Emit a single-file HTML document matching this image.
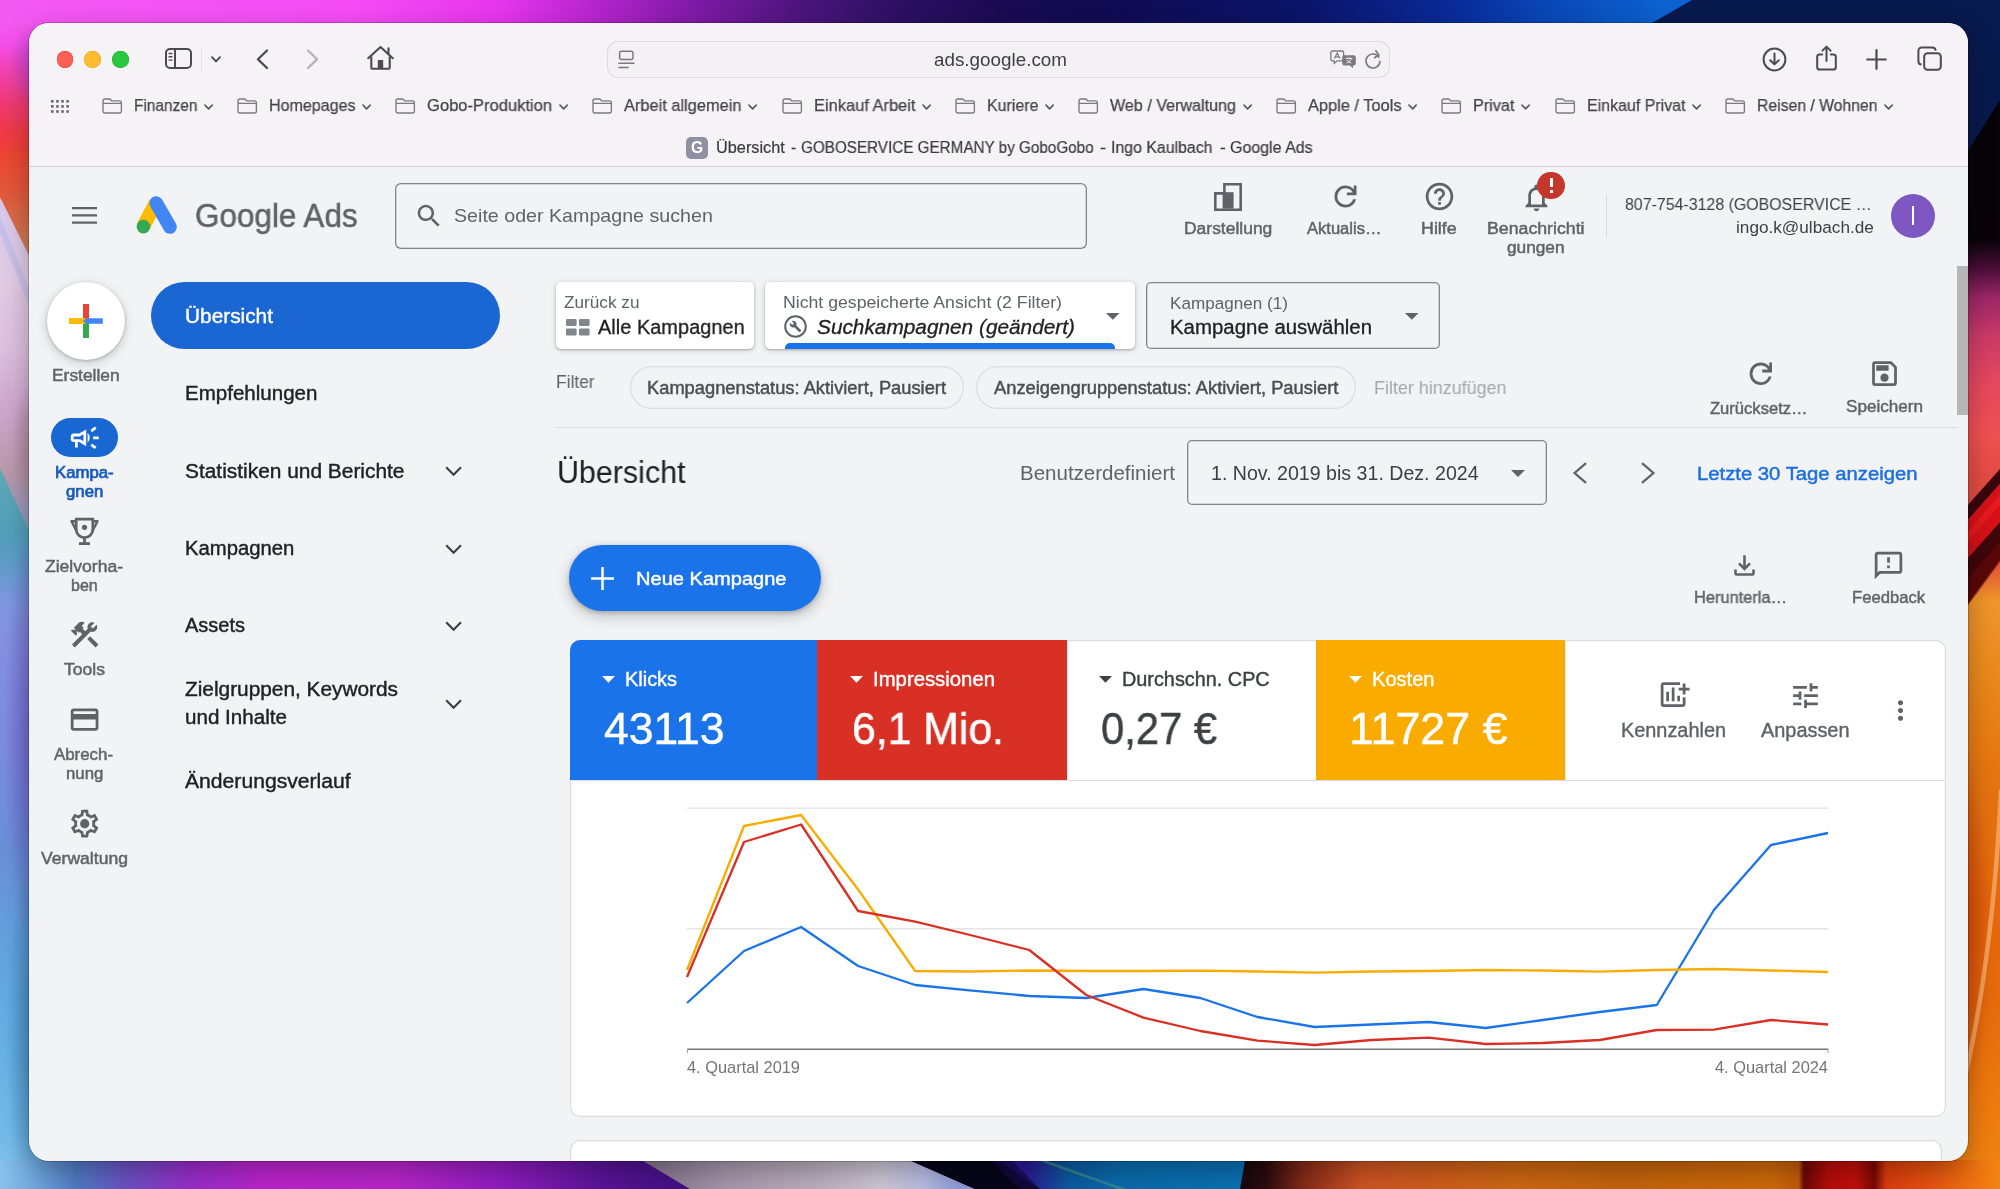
<!DOCTYPE html>
<html lang="de"><head><meta charset="utf-8"><title>Google Ads</title>
<style>
html,body{margin:0;padding:0;}
body{width:2000px;height:1189px;overflow:hidden;position:relative;background:#101030;font-family:"Liberation Sans", sans-serif;}
svg{display:block;overflow:visible}
</style></head><body>
<svg style="position:absolute;left:0;top:0;overflow:hidden" width="50" height="1189" viewBox="0 0 45 1189" preserveAspectRatio="none"><defs><linearGradient id="lg0" x1="0" x2="0" y1="0" y2="1189" gradientUnits="userSpaceOnUse"><stop offset="0.0000" stop-color="#f25af2"/><stop offset="0.0202" stop-color="#f258f0"/><stop offset="0.0378" stop-color="#f44ee6"/><stop offset="0.0589" stop-color="#f244b4"/><stop offset="0.0841" stop-color="#f03a7a"/><stop offset="0.1093" stop-color="#f03a48"/><stop offset="0.1346" stop-color="#ee4430"/><stop offset="0.1640" stop-color="#e2583a"/><stop offset="0.1682" stop-color="#d8c8ec"/><stop offset="0.2380" stop-color="#e2cce4"/><stop offset="0.2944" stop-color="#dcc0de"/><stop offset="0.3398" stop-color="#cfaad0"/><stop offset="0.3701" stop-color="#c4a0bc"/><stop offset="0.3995" stop-color="#b898aa"/><stop offset="0.4710" stop-color="#6c9cd4"/><stop offset="0.5046" stop-color="#7e98e0"/><stop offset="0.5467" stop-color="#8690e2"/><stop offset="0.6308" stop-color="#7c8cde"/><stop offset="0.7149" stop-color="#6a90da"/><stop offset="0.7990" stop-color="#62a4e0"/><stop offset="0.8831" stop-color="#66b2e6"/><stop offset="0.9504" stop-color="#72baea"/><stop offset="1.0000" stop-color="#86c4ee"/></linearGradient><linearGradient id="lg1" x1="0" x2="0" y1="150" y2="300" gradientUnits="userSpaceOnUse"><stop offset="0" stop-color="#ee4430"/><stop offset="0.3" stop-color="#e25a3c"/><stop offset="0.55" stop-color="#d27450"/><stop offset="1" stop-color="#b88c74"/></linearGradient><linearGradient id="lg2" x1="0" x2="0" y1="468" y2="600" gradientUnits="userSpaceOnUse"><stop offset="0" stop-color="#5eaab4"/><stop offset="0.5" stop-color="#52a0bc"/><stop offset="0.8" stop-color="#669cd0"/><stop offset="1" stop-color="#7e98e0"/></linearGradient><radialGradient id="lr3"><stop offset="0" stop-color="#5a3cb0" stop-opacity="0.6"/><stop offset="1" stop-color="#5a3cb0" stop-opacity="0"/></radialGradient><radialGradient id="lr4"><stop offset="0" stop-color="#1c5a94" stop-opacity="0.55"/><stop offset="1" stop-color="#1c5a94" stop-opacity="0"/></radialGradient><radialGradient id="lr5"><stop offset="0" stop-color="#806070" stop-opacity="0.5"/><stop offset="1" stop-color="#806070" stop-opacity="0"/></radialGradient><radialGradient id="lr6"><stop offset="0" stop-color="#a040e0" stop-opacity="0.5"/><stop offset="1" stop-color="#a040e0" stop-opacity="0"/></radialGradient></defs><rect x="0" y="0" width="45" height="1189" fill="url(#lg0)"/><ellipse cx="34" cy="66" rx="26" ry="42" fill="url(#lr6)"/><polygon points="0,150 45,150 45,298 0,197" fill="url(#lg1)"/><polygon points="0,216 0,233 45,358 45,341" fill="#b8b8ee" opacity="0.55"/><polygon points="0,468 45,577 45,600 0,600" fill="url(#lg2)"/><ellipse cx="36" cy="735" rx="32" ry="230" fill="url(#lr3)"/><ellipse cx="36" cy="1040" rx="30" ry="200" fill="url(#lr4)"/><ellipse cx="36" cy="445" rx="26" ry="70" fill="url(#lr5)"/></svg>
<svg style="position:absolute;left:1950px;top:0;overflow:hidden" width="50" height="1189" viewBox="1955 0 45 1189" preserveAspectRatio="none"><defs><linearGradient id="rg0" x1="0" x2="0" y1="0" y2="1189" gradientUnits="userSpaceOnUse"><stop offset="0.0000" stop-color="#050308"/><stop offset="0.2019" stop-color="#0a0409"/><stop offset="0.2254" stop-color="#4a0e38"/><stop offset="0.2506" stop-color="#9c2868"/><stop offset="0.2826" stop-color="#cc3a68"/><stop offset="0.3221" stop-color="#e64860"/><stop offset="0.3642" stop-color="#f05052"/><stop offset="0.4037" stop-color="#e44c42"/><stop offset="0.4710" stop-color="#dc4a3a"/><stop offset="0.5046" stop-color="#f0962a"/><stop offset="0.5887" stop-color="#ea8418"/><stop offset="0.6560" stop-color="#e6740f"/><stop offset="0.7569" stop-color="#e4680c"/><stop offset="0.8410" stop-color="#e66a0c"/><stop offset="0.9251" stop-color="#ee7a0e"/><stop offset="1.0000" stop-color="#f08412"/></linearGradient><radialGradient id="rr1"><stop offset="0" stop-color="#c82c05" stop-opacity="0.75"/><stop offset="0.6" stop-color="#c82c05" stop-opacity="0.35"/><stop offset="1" stop-color="#c82c05" stop-opacity="0"/></radialGradient></defs><rect x="1955" y="0" width="45" height="1189" fill="url(#rg0)"/><polygon points="1955,0 2000,0 2000,100 1955,179" fill="#08194d"/><polygon points="1955,525 2000,469 2000,484 1955,540" fill="#3a060c"/><polygon points="1955,540 2000,484 2000,522 1955,578" fill="#d81018"/><polygon points="1955,551 2000,495 2000,505 1955,561" fill="#ee2020" opacity="0.7"/><polygon points="1955,578 2000,522 2000,560 1955,628" fill="#40060a"/><polygon points="1955,598 2000,542 2000,562 1955,630" fill="#6a0a08" opacity="0.6"/><ellipse cx="1952" cy="930" rx="40" ry="210" fill="url(#rr1)"/><path d="M2001,790 C1996,900 1985,1000 1967,1085" stroke="#f6b070" stroke-width="4" fill="none" opacity="0.75"/><circle cx="1962" cy="1200" r="34" fill="#e02c0c" opacity="0.8"/></svg>
<div style="position:absolute;left:0px;top:0px;width:2000px;height:24px;background:linear-gradient(90deg,#f25af2 0px,#f54cf6 350px,#e636ec 500px,#b424cc 600px,#7c1aa4 700px,#4c157c 800px,#2c1062 900px,#1a0b52 1000px,#110b52 1100px,#0b1468 1300px,#0a2a98 1450px,#0a48b8 1550px,#0b5ccb 1640px,#0c62d0 1660px);"></div>
<svg style="position:absolute;left:1640px;top:0" width="360" height="24" viewBox="0 0 360 24"><polygon points="52,0 360,0 360,24 10.3,24" fill="#08194d"/></svg>
<svg style="position:absolute;left:0;top:1160px;overflow:hidden" width="2000" height="29" viewBox="0 1160 2000 29"><defs><linearGradient id="bg1" x1="0" x2="700" y1="0" y2="0" gradientUnits="userSpaceOnUse"><stop offset="0" stop-color="#88c2ea"/><stop offset="0.05" stop-color="#6fa8de"/><stop offset="0.11" stop-color="#4f7cc4"/><stop offset="0.18" stop-color="#6a52c4"/><stop offset="0.27" stop-color="#982ecb"/><stop offset="0.38" stop-color="#bc24cd"/><stop offset="0.56" stop-color="#ba26cb"/><stop offset="0.72" stop-color="#901cc0"/><stop offset="0.86" stop-color="#5a1499"/><stop offset="1" stop-color="#3c0f80"/></linearGradient><linearGradient id="bg2" x1="650" x2="960" y1="0" y2="0" gradientUnits="userSpaceOnUse"><stop offset="0" stop-color="#85758d"/><stop offset="0.25" stop-color="#a898ac"/><stop offset="0.55" stop-color="#bdb2c0"/><stop offset="0.75" stop-color="#cfc8d6"/><stop offset="0.88" stop-color="#b9bde4"/><stop offset="1" stop-color="#8c9cd8"/></linearGradient><linearGradient id="bg3" x1="990" x2="1250" y1="0" y2="0" gradientUnits="userSpaceOnUse"><stop offset="0" stop-color="#2a0f8c"/><stop offset="0.14" stop-color="#2a1a96"/><stop offset="0.3" stop-color="#0b5aa0"/><stop offset="0.5" stop-color="#0a6cae"/><stop offset="1" stop-color="#0a72b4"/></linearGradient><linearGradient id="bg4" x1="1240" x2="2000" y1="0" y2="0" gradientUnits="userSpaceOnUse"><stop offset="0" stop-color="#14080e"/><stop offset="0.035" stop-color="#2c0c0e"/><stop offset="0.085" stop-color="#882c18"/><stop offset="0.16" stop-color="#d05424"/><stop offset="0.26" stop-color="#d05e1c"/><stop offset="0.36" stop-color="#ce6812"/><stop offset="0.5" stop-color="#c6640c"/><stop offset="0.7" stop-color="#ce6a0a"/><stop offset="0.735" stop-color="#c45a0a"/><stop offset="0.742" stop-color="#6c0806"/><stop offset="0.775" stop-color="#b80c08"/><stop offset="0.81" stop-color="#c21008"/><stop offset="0.835" stop-color="#7a0806"/><stop offset="0.85" stop-color="#dc3c0c"/><stop offset="0.9" stop-color="#e6500e"/><stop offset="0.95" stop-color="#ee6a10"/><stop offset="1" stop-color="#f28412"/></linearGradient></defs><rect x="0" y="1149" width="700" height="40" fill="url(#bg1)"/><polygon points="623,1149 884,1149 975,1189 690,1189" fill="url(#bg2)"/><polygon points="884,1149 1000,1149 1040,1189 975,1189" fill="#07061a"/><polygon points="980,1149 1250,1149 1250,1189 1040,1189" fill="url(#bg3)"/><polygon points="980,1149 1000,1149 1040,1189 1020,1189" fill="#160a4a" opacity="0.7"/><path d="M1035 1158 L1125 1190" stroke="#3c8c8c" stroke-width="2.5" opacity="0.8"/><polygon points="1247,1149 2000,1149 2000,1189 1240,1189" fill="url(#bg4)"/></svg>
<div style="position:absolute;left:29px;top:23px;width:1939px;height:1138px;border-radius:20px;background:#f1f3f4;box-shadow:0 0 0 1px rgba(0,0,0,0.18),0 10px 28px rgba(0,0,0,0.30);"></div>
<div style="position:absolute;left:29px;top:23px;width:1939px;height:143px;border-radius:20px 20px 0 0;background:#f5f3f6;"></div>
<div style="position:absolute;left:29px;top:166px;width:1939px;height:1px;background:#d3d1d5;"></div>
<div style="position:absolute;left:56.6px;top:50.9px;width:16.8px;height:16.8px;border-radius:50%;background:#fe5f57;box-shadow:inset 0 0 0 0.5px #e0443e;"></div>
<div style="position:absolute;left:84.39999999999999px;top:50.9px;width:16.8px;height:16.8px;border-radius:50%;background:#febc2e;box-shadow:inset 0 0 0 0.5px #dea123;"></div>
<div style="position:absolute;left:112.1px;top:50.9px;width:16.8px;height:16.8px;border-radius:50%;background:#28c840;box-shadow:inset 0 0 0 0.5px #1aab29;"></div>
<svg style="position:absolute;left:165px;top:48px;" width="27" height="21" viewBox="0 0 27 21"><rect x="1" y="1" width="25" height="19" rx="4" fill="none" stroke="#4c4a4e" stroke-width="2"/><line x1="10" y1="1" x2="10" y2="20" stroke="#4c4a4e" stroke-width="2"/><path d="M3.6 5.5h3.8M3.6 8.8h3.8M3.6 12.1h3.8" stroke="#4c4a4e" stroke-width="1.4"/></svg>
<div style="position:absolute;left:201px;top:47px;width:1px;height:25px;background:#e3e1e5;"></div>
<svg style="position:absolute;left:211px;top:55.5px;" width="10" height="7" viewBox="0 0 10 7"><polyline points="1,1.2 5,5.4 9,1.2" fill="none" stroke="#4c4a4e" stroke-width="1.9" stroke-linecap="round" stroke-linejoin="round"/></svg>
<svg style="position:absolute;left:256px;top:48.5px;" width="13" height="21" viewBox="0 0 13 21"><polyline points="11,1.5 2,10.3 11,19" fill="none" stroke="#4c4a4e" stroke-width="2.3" stroke-linecap="round" stroke-linejoin="round"/></svg>
<svg style="position:absolute;left:306px;top:48.5px;" width="13" height="21" viewBox="0 0 13 21"><polyline points="2,1.5 11,10.3 2,19" fill="none" stroke="#b4b2b6" stroke-width="2.3" stroke-linecap="round" stroke-linejoin="round"/></svg>
<svg style="position:absolute;left:366px;top:45px;" width="29" height="26" viewBox="0 0 29 26"><path d="M2.2 13.2 L14.5 2 L26.8 13.2" fill="none" stroke="#4c4a4e" stroke-width="2.1" stroke-linecap="round" stroke-linejoin="round"/><path d="M5.3 11.6V22.2a1.6 1.6 0 0 0 1.6 1.6H22.1a1.6 1.6 0 0 0 1.6-1.6V11.6" fill="none" stroke="#4c4a4e" stroke-width="2.1"/><rect x="11.8" y="15" width="5.4" height="8.8" fill="#4c4a4e"/><path d="M22.5 3.4v5" stroke="#4c4a4e" stroke-width="2.1" stroke-linecap="round"/></svg>
<div style="position:absolute;left:607px;top:40.5px;width:783px;height:37.5px;border-radius:11px;background:#f3f1f4;box-shadow:inset 0 0 0 1px #dddbdf;box-sizing:border-box;"></div>
<svg style="position:absolute;left:618px;top:50px;" width="17" height="20" viewBox="0 0 17 20"><rect x="1.6" y="1.2" width="13.4" height="8.2" rx="2" fill="none" stroke="#7b797d" stroke-width="1.5"/><path d="M1 13.2h15M1 17.4h9.2" stroke="#7b797d" stroke-width="1.5" stroke-linecap="round"/></svg>
<div style="position:absolute;left:933.50px;top:51.00px;font-size:18.3px;line-height:1;color:#3f3d41;white-space:pre;will-change:transform;transform:scaleX(1.0304);transform-origin:left center;">ads.google.com</div>
<svg style="position:absolute;left:1330px;top:50px;" width="27" height="19" viewBox="0 0 27 19"><path d="M2.4 1h9.6a1.6 1.6 0 0 1 1.6 1.6v6.6a1.6 1.6 0 0 1-1.6 1.6H7.2L4.2 13.4V10.8H2.4A1.6 1.6 0 0 1 .8 9.2V2.6A1.6 1.6 0 0 1 2.4 1z" fill="none" stroke="#7b797d" stroke-width="1.3"/><path d="M4.4 8.6L7.2 3 10 8.6M5.4 6.8h3.6" fill="none" stroke="#7b797d" stroke-width="1.2"/><path d="M14.2 5.2h9.6a2 2 0 0 1 2 2v6.2a2 2 0 0 1-2 2h-.8v2.8l-3.2-2.8h-5.6a2 2 0 0 1-2-2V7.2a2 2 0 0 1 2-2z" fill="#7b797d"/><path d="M15.6 8.4h6.8M19 7.2v1.2M21.2 8.4c-.6 2.2-2.4 3.8-4.6 4.6M17 10c.8 1.4 2.4 2.6 4.4 3" fill="none" stroke="#f3f1f4" stroke-width="1"/></svg>
<svg style="position:absolute;left:1364px;top:50px;" width="18" height="20" viewBox="0 0 18 20"><path d="M14.9 7.2A7 7 0 1 0 16 11.4" fill="none" stroke="#7b797d" stroke-width="1.6" stroke-linecap="round"/><path d="M11 1.4L14.9 5 11.2 8.6" fill="none" stroke="#7b797d" stroke-width="1.6" stroke-linecap="round" stroke-linejoin="round" transform="rotate(12 14.9 5)"/></svg>
<svg style="position:absolute;left:1761.5px;top:47px;" width="25" height="25" viewBox="0 0 25 25"><circle cx="12.5" cy="12.5" r="10.9" fill="none" stroke="#4c4a4e" stroke-width="2"/><path d="M12.5 6.6v10.6M8.2 13.2l4.3 4.2 4.3-4.2" fill="none" stroke="#4c4a4e" stroke-width="2" stroke-linecap="round" stroke-linejoin="round"/></svg>
<svg style="position:absolute;left:1814.5px;top:44.5px;" width="23" height="27" viewBox="0 0 23 27"><path d="M7.2 9.6H4.6A2.4 2.4 0 0 0 2.2 12V22.2A2.4 2.4 0 0 0 4.6 24.6H18.4A2.4 2.4 0 0 0 20.8 22.2V12A2.4 2.4 0 0 0 18.4 9.6H15.8" fill="none" stroke="#4c4a4e" stroke-width="2" stroke-linecap="round"/><path d="M11.5 16V1.8M7.4 5.6l4.1-4 4.1 4" fill="none" stroke="#4c4a4e" stroke-width="2" stroke-linecap="round" stroke-linejoin="round"/></svg>
<svg style="position:absolute;left:1866px;top:48.5px;" width="21" height="21" viewBox="0 0 21 21"><path d="M10.5 1.2v18.6M1.2 10.5h18.6" stroke="#4c4a4e" stroke-width="2.2" stroke-linecap="round"/></svg>
<svg style="position:absolute;left:1916.5px;top:46px;" width="26" height="26" viewBox="0 0 26 26"><rect x="7.2" y="7.2" width="16.6" height="16.6" rx="3.4" fill="#f5f3f6" stroke="#4c4a4e" stroke-width="2"/><path d="M4.6 18.6A3.4 3.4 0 0 1 1.4 15.2V4.8A3.4 3.4 0 0 1 4.8 1.4H15.2A3.4 3.4 0 0 1 18.6 4.6" fill="none" stroke="#4c4a4e" stroke-width="2"/></svg>
<svg style="position:absolute;left:51px;top:100px;" width="18" height="13" viewBox="0 0 18 13"><rect x="0.0" y="0.0" width="2.6" height="2.6" fill="#6a686c"/><rect x="0.0" y="5.1" width="2.6" height="2.6" fill="#6a686c"/><rect x="0.0" y="10.2" width="2.6" height="2.6" fill="#6a686c"/><rect x="5.1" y="0.0" width="2.6" height="2.6" fill="#6a686c"/><rect x="5.1" y="5.1" width="2.6" height="2.6" fill="#6a686c"/><rect x="5.1" y="10.2" width="2.6" height="2.6" fill="#6a686c"/><rect x="10.2" y="0.0" width="2.6" height="2.6" fill="#6a686c"/><rect x="10.2" y="5.1" width="2.6" height="2.6" fill="#6a686c"/><rect x="10.2" y="10.2" width="2.6" height="2.6" fill="#6a686c"/><rect x="15.299999999999999" y="0.0" width="2.6" height="2.6" fill="#6a686c"/><rect x="15.299999999999999" y="5.1" width="2.6" height="2.6" fill="#6a686c"/><rect x="15.299999999999999" y="10.2" width="2.6" height="2.6" fill="#6a686c"/></svg>
<svg style="position:absolute;left:102px;top:97.6px;" width="20.4" height="16" viewBox="0 0 20.4 16"><path d="M1 4.2V3A2 2 0 0 1 3 1H7.2a2 2 0 0 1 1.5.7L9.6 2.8H17.4A2 2 0 0 1 19.4 4.8V13A2 2 0 0 1 17.4 15H3A2 2 0 0 1 1 13V4.2zM1 5.4H19.4" fill="none" stroke="#7b797d" stroke-width="1.35" stroke-linejoin="round"/></svg>
<div style="position:absolute;left:133.50px;top:98.00px;font-size:16.6px;line-height:1;color:#454347;white-space:pre;will-change:transform;transform:scaleX(0.9302);transform-origin:left center;-webkit-text-stroke:0.25px #454347;">Finanzen</div>
<svg style="position:absolute;left:204px;top:103.6px;" width="9.2" height="6" viewBox="0 0 9.2 6"><polyline points="1,1.2 4.6,4.9 8.2,1.2" fill="none" stroke="#5e5c60" stroke-width="1.7" stroke-linecap="round" stroke-linejoin="round"/></svg>
<svg style="position:absolute;left:237px;top:97.6px;" width="20.4" height="16" viewBox="0 0 20.4 16"><path d="M1 4.2V3A2 2 0 0 1 3 1H7.2a2 2 0 0 1 1.5.7L9.6 2.8H17.4A2 2 0 0 1 19.4 4.8V13A2 2 0 0 1 17.4 15H3A2 2 0 0 1 1 13V4.2zM1 5.4H19.4" fill="none" stroke="#7b797d" stroke-width="1.35" stroke-linejoin="round"/></svg>
<div style="position:absolute;left:268.50px;top:98.00px;font-size:16.6px;line-height:1;color:#454347;white-space:pre;will-change:transform;transform:scaleX(0.9666);transform-origin:left center;-webkit-text-stroke:0.25px #454347;">Homepages</div>
<svg style="position:absolute;left:361.5px;top:103.6px;" width="9.2" height="6" viewBox="0 0 9.2 6"><polyline points="1,1.2 4.6,4.9 8.2,1.2" fill="none" stroke="#5e5c60" stroke-width="1.7" stroke-linecap="round" stroke-linejoin="round"/></svg>
<svg style="position:absolute;left:395px;top:97.6px;" width="20.4" height="16" viewBox="0 0 20.4 16"><path d="M1 4.2V3A2 2 0 0 1 3 1H7.2a2 2 0 0 1 1.5.7L9.6 2.8H17.4A2 2 0 0 1 19.4 4.8V13A2 2 0 0 1 17.4 15H3A2 2 0 0 1 1 13V4.2zM1 5.4H19.4" fill="none" stroke="#7b797d" stroke-width="1.35" stroke-linejoin="round"/></svg>
<div style="position:absolute;left:427.00px;top:98.00px;font-size:16.6px;line-height:1;color:#454347;white-space:pre;will-change:transform;transform:scaleX(0.9964);transform-origin:left center;-webkit-text-stroke:0.25px #454347;">Gobo-Produktion</div>
<svg style="position:absolute;left:558.5px;top:103.6px;" width="9.2" height="6" viewBox="0 0 9.2 6"><polyline points="1,1.2 4.6,4.9 8.2,1.2" fill="none" stroke="#5e5c60" stroke-width="1.7" stroke-linecap="round" stroke-linejoin="round"/></svg>
<svg style="position:absolute;left:592px;top:97.6px;" width="20.4" height="16" viewBox="0 0 20.4 16"><path d="M1 4.2V3A2 2 0 0 1 3 1H7.2a2 2 0 0 1 1.5.7L9.6 2.8H17.4A2 2 0 0 1 19.4 4.8V13A2 2 0 0 1 17.4 15H3A2 2 0 0 1 1 13V4.2zM1 5.4H19.4" fill="none" stroke="#7b797d" stroke-width="1.35" stroke-linejoin="round"/></svg>
<div style="position:absolute;left:623.50px;top:98.00px;font-size:16.6px;line-height:1;color:#454347;white-space:pre;will-change:transform;transform:scaleX(0.9875);transform-origin:left center;-webkit-text-stroke:0.25px #454347;">Arbeit allgemein</div>
<svg style="position:absolute;left:748px;top:103.6px;" width="9.2" height="6" viewBox="0 0 9.2 6"><polyline points="1,1.2 4.6,4.9 8.2,1.2" fill="none" stroke="#5e5c60" stroke-width="1.7" stroke-linecap="round" stroke-linejoin="round"/></svg>
<svg style="position:absolute;left:782px;top:97.6px;" width="20.4" height="16" viewBox="0 0 20.4 16"><path d="M1 4.2V3A2 2 0 0 1 3 1H7.2a2 2 0 0 1 1.5.7L9.6 2.8H17.4A2 2 0 0 1 19.4 4.8V13A2 2 0 0 1 17.4 15H3A2 2 0 0 1 1 13V4.2zM1 5.4H19.4" fill="none" stroke="#7b797d" stroke-width="1.35" stroke-linejoin="round"/></svg>
<div style="position:absolute;left:813.50px;top:98.00px;font-size:16.6px;line-height:1;color:#454347;white-space:pre;will-change:transform;transform:scaleX(0.9913);transform-origin:left center;-webkit-text-stroke:0.25px #454347;">Einkauf Arbeit</div>
<svg style="position:absolute;left:921.5px;top:103.6px;" width="9.2" height="6" viewBox="0 0 9.2 6"><polyline points="1,1.2 4.6,4.9 8.2,1.2" fill="none" stroke="#5e5c60" stroke-width="1.7" stroke-linecap="round" stroke-linejoin="round"/></svg>
<svg style="position:absolute;left:955px;top:97.6px;" width="20.4" height="16" viewBox="0 0 20.4 16"><path d="M1 4.2V3A2 2 0 0 1 3 1H7.2a2 2 0 0 1 1.5.7L9.6 2.8H17.4A2 2 0 0 1 19.4 4.8V13A2 2 0 0 1 17.4 15H3A2 2 0 0 1 1 13V4.2zM1 5.4H19.4" fill="none" stroke="#7b797d" stroke-width="1.35" stroke-linejoin="round"/></svg>
<div style="position:absolute;left:986.50px;top:98.00px;font-size:16.6px;line-height:1;color:#454347;white-space:pre;will-change:transform;transform:scaleX(0.9626);transform-origin:left center;-webkit-text-stroke:0.25px #454347;">Kuriere</div>
<svg style="position:absolute;left:1044.5px;top:103.6px;" width="9.2" height="6" viewBox="0 0 9.2 6"><polyline points="1,1.2 4.6,4.9 8.2,1.2" fill="none" stroke="#5e5c60" stroke-width="1.7" stroke-linecap="round" stroke-linejoin="round"/></svg>
<svg style="position:absolute;left:1078px;top:97.6px;" width="20.4" height="16" viewBox="0 0 20.4 16"><path d="M1 4.2V3A2 2 0 0 1 3 1H7.2a2 2 0 0 1 1.5.7L9.6 2.8H17.4A2 2 0 0 1 19.4 4.8V13A2 2 0 0 1 17.4 15H3A2 2 0 0 1 1 13V4.2zM1 5.4H19.4" fill="none" stroke="#7b797d" stroke-width="1.35" stroke-linejoin="round"/></svg>
<div style="position:absolute;left:1110.00px;top:98.00px;font-size:16.6px;line-height:1;color:#454347;white-space:pre;will-change:transform;transform:scaleX(0.9710);transform-origin:left center;-webkit-text-stroke:0.25px #454347;">Web / Verwaltung</div>
<svg style="position:absolute;left:1242.5px;top:103.6px;" width="9.2" height="6" viewBox="0 0 9.2 6"><polyline points="1,1.2 4.6,4.9 8.2,1.2" fill="none" stroke="#5e5c60" stroke-width="1.7" stroke-linecap="round" stroke-linejoin="round"/></svg>
<svg style="position:absolute;left:1276px;top:97.6px;" width="20.4" height="16" viewBox="0 0 20.4 16"><path d="M1 4.2V3A2 2 0 0 1 3 1H7.2a2 2 0 0 1 1.5.7L9.6 2.8H17.4A2 2 0 0 1 19.4 4.8V13A2 2 0 0 1 17.4 15H3A2 2 0 0 1 1 13V4.2zM1 5.4H19.4" fill="none" stroke="#7b797d" stroke-width="1.35" stroke-linejoin="round"/></svg>
<div style="position:absolute;left:1307.50px;top:98.00px;font-size:16.6px;line-height:1;color:#454347;white-space:pre;will-change:transform;transform:scaleX(0.9871);transform-origin:left center;-webkit-text-stroke:0.25px #454347;">Apple / Tools</div>
<svg style="position:absolute;left:1407.5px;top:103.6px;" width="9.2" height="6" viewBox="0 0 9.2 6"><polyline points="1,1.2 4.6,4.9 8.2,1.2" fill="none" stroke="#5e5c60" stroke-width="1.7" stroke-linecap="round" stroke-linejoin="round"/></svg>
<svg style="position:absolute;left:1441px;top:97.6px;" width="20.4" height="16" viewBox="0 0 20.4 16"><path d="M1 4.2V3A2 2 0 0 1 3 1H7.2a2 2 0 0 1 1.5.7L9.6 2.8H17.4A2 2 0 0 1 19.4 4.8V13A2 2 0 0 1 17.4 15H3A2 2 0 0 1 1 13V4.2zM1 5.4H19.4" fill="none" stroke="#7b797d" stroke-width="1.35" stroke-linejoin="round"/></svg>
<div style="position:absolute;left:1472.50px;top:98.00px;font-size:16.6px;line-height:1;color:#454347;white-space:pre;will-change:transform;transform:scaleX(0.9783);transform-origin:left center;-webkit-text-stroke:0.25px #454347;">Privat</div>
<svg style="position:absolute;left:1520.5px;top:103.6px;" width="9.2" height="6" viewBox="0 0 9.2 6"><polyline points="1,1.2 4.6,4.9 8.2,1.2" fill="none" stroke="#5e5c60" stroke-width="1.7" stroke-linecap="round" stroke-linejoin="round"/></svg>
<svg style="position:absolute;left:1555px;top:97.6px;" width="20.4" height="16" viewBox="0 0 20.4 16"><path d="M1 4.2V3A2 2 0 0 1 3 1H7.2a2 2 0 0 1 1.5.7L9.6 2.8H17.4A2 2 0 0 1 19.4 4.8V13A2 2 0 0 1 17.4 15H3A2 2 0 0 1 1 13V4.2zM1 5.4H19.4" fill="none" stroke="#7b797d" stroke-width="1.35" stroke-linejoin="round"/></svg>
<div style="position:absolute;left:1586.50px;top:98.00px;font-size:16.6px;line-height:1;color:#454347;white-space:pre;will-change:transform;transform:scaleX(0.9621);transform-origin:left center;-webkit-text-stroke:0.25px #454347;">Einkauf Privat</div>
<svg style="position:absolute;left:1691.5px;top:103.6px;" width="9.2" height="6" viewBox="0 0 9.2 6"><polyline points="1,1.2 4.6,4.9 8.2,1.2" fill="none" stroke="#5e5c60" stroke-width="1.7" stroke-linecap="round" stroke-linejoin="round"/></svg>
<svg style="position:absolute;left:1725px;top:97.6px;" width="20.4" height="16" viewBox="0 0 20.4 16"><path d="M1 4.2V3A2 2 0 0 1 3 1H7.2a2 2 0 0 1 1.5.7L9.6 2.8H17.4A2 2 0 0 1 19.4 4.8V13A2 2 0 0 1 17.4 15H3A2 2 0 0 1 1 13V4.2zM1 5.4H19.4" fill="none" stroke="#7b797d" stroke-width="1.35" stroke-linejoin="round"/></svg>
<div style="position:absolute;left:1756.50px;top:98.00px;font-size:16.6px;line-height:1;color:#454347;white-space:pre;will-change:transform;transform:scaleX(0.9488);transform-origin:left center;-webkit-text-stroke:0.25px #454347;">Reisen / Wohnen</div>
<svg style="position:absolute;left:1883.5px;top:103.6px;" width="9.2" height="6" viewBox="0 0 9.2 6"><polyline points="1,1.2 4.6,4.9 8.2,1.2" fill="none" stroke="#5e5c60" stroke-width="1.7" stroke-linecap="round" stroke-linejoin="round"/></svg>
<div style="position:absolute;left:685.5px;top:136.5px;width:22px;height:22px;border-radius:5px;background:#8f91a2;"></div>
<div style="position:absolute;left:690.50px;top:140.00px;font-size:15.6px;line-height:1;color:#ffffff;white-space:pre;will-change:transform;transform:scaleX(0.9884);transform-origin:left center;font-weight:700;">G</div>
<div style="position:absolute;left:715.60px;top:139.00px;font-size:16.3px;line-height:1;color:#3b393d;white-space:pre;will-change:transform;transform:scaleX(1.0003);transform-origin:left center;-webkit-text-stroke:0.2px #3b393d;">Übersicht</div>
<div style="position:absolute;left:790.80px;top:139.00px;font-size:16.3px;line-height:1;color:#3b393d;white-space:pre;will-change:transform;transform:scaleX(0.9591);transform-origin:left center;-webkit-text-stroke:0.2px #3b393d;">-</div>
<div style="position:absolute;left:801.40px;top:139.00px;font-size:16.3px;line-height:1;color:#3b393d;white-space:pre;will-change:transform;transform:scaleX(0.9364);transform-origin:left center;-webkit-text-stroke:0.2px #3b393d;">GOBOSERVICE GERMANY by GoboGobo</div>
<div style="position:absolute;left:1100.20px;top:139.00px;font-size:16.3px;line-height:1;color:#3b393d;white-space:pre;will-change:transform;transform:scaleX(1.1066);transform-origin:left center;-webkit-text-stroke:0.2px #3b393d;">-</div>
<div style="position:absolute;left:1111.00px;top:139.00px;font-size:16.3px;line-height:1;color:#3b393d;white-space:pre;will-change:transform;transform:scaleX(0.9749);transform-origin:left center;-webkit-text-stroke:0.2px #3b393d;">Ingo Kaulbach</div>
<div style="position:absolute;left:1220.20px;top:139.00px;font-size:16.3px;line-height:1;color:#3b393d;white-space:pre;will-change:transform;transform:scaleX(1.0697);transform-origin:left center;-webkit-text-stroke:0.2px #3b393d;">-</div>
<div style="position:absolute;left:1230.00px;top:139.00px;font-size:16.3px;line-height:1;color:#3b393d;white-space:pre;will-change:transform;transform:scaleX(0.9811);transform-origin:left center;-webkit-text-stroke:0.2px #3b393d;">Google Ads</div>
<svg style="position:absolute;left:72px;top:207.4px;" width="25" height="17" viewBox="0 0 25 17"><path d="M0 1.2h25M0 8.4h25M0 15.6h25" stroke="#5f6368" stroke-width="2.3"/></svg>
<svg style="position:absolute;left:134px;top:194px;" width="46" height="42" viewBox="0 0 46 42"><line x1="22" y1="9" x2="9.4" y2="32.4" stroke="#fbbc04" stroke-width="13.6" stroke-linecap="butt"/><path d="M15.6 5.6 L27.6 12.2 L15.4 35.4 L3.4 28.8z" fill="#fbbc04"/><line x1="22.2" y1="9" x2="36" y2="33" stroke="#4285f4" stroke-width="13.6" stroke-linecap="round"/><circle cx="9.4" cy="32.6" r="6.8" fill="#34a853"/></svg>
<div style="position:absolute;left:195.40px;top:199.00px;font-size:33.4px;line-height:1;color:#5f6368;white-space:pre;will-change:transform;transform:scaleX(0.9418);transform-origin:left center;-webkit-text-stroke:0.5px #5f6368;">Google Ads</div>
<div style="position:absolute;left:395px;top:183px;width:692px;height:65.5px;border-radius:6px;box-shadow:inset 0 0 0 1.3px #80868b;"></div>
<svg style="position:absolute;left:414px;top:201px;" width="30" height="30" viewBox="0 0 24 24"><path d="M15.5 14h-.79l-.28-.27C15.41 12.59 16 11.11 16 9.5 16 5.91 13.09 3 9.5 3S3 5.91 3 9.5 5.91 16 9.5 16c1.61 0 3.09-.59 4.23-1.57l.27.28v.79l5 4.99L20.49 19l-4.99-5zm-6 0C7.01 14 5 11.99 5 9.5S7.01 5 9.5 5 14 7.01 14 9.5 11.99 14 9.5 14z" fill="#5f6368"/></svg>
<div style="position:absolute;left:453.80px;top:206.00px;font-size:19px;line-height:1;color:#5f6368;white-space:pre;will-change:transform;transform:scaleX(1.0338);transform-origin:left center;">Seite oder Kampagne suchen</div>
<svg style="position:absolute;left:1214px;top:182.5px;" width="28" height="28" viewBox="0 0 28 28"><path d="M10.4 1.3H26.7V26.7H1.3V10.4H10.4z" fill="none" stroke="#5f6368" stroke-width="2.6"/><rect x="8.6" y="9.2" width="11" height="16.4" fill="#5f6368"/></svg>
<div style="position:absolute;left:1183.70px;top:221.00px;font-size:16px;line-height:1;color:#5f6368;white-space:pre;will-change:transform;transform:scaleX(1.0910);transform-origin:left center;-webkit-text-stroke:0.45px #5f6368;">Darstellung</div>
<svg style="position:absolute;left:1328.8px;top:179.8px;" width="33" height="33" viewBox="0 0 24 24"><path d="M12 20q-3.35 0-5.675-2.325T4 12q0-3.35 2.325-5.675T12 4q1.725 0 3.3.712T18 6.75V4h2v7h-7V9h4.2q-.8-1.4-2.187-2.2T12 6Q9.5 6 7.75 7.750T6 12q0 2.5 1.75 4.250T12 18q1.925 0 3.475-1.100T17.650 14h2.100q-.7 2.650-2.850 4.325T12 20Z" fill="#5f6368"/></svg>
<div style="position:absolute;left:1306.50px;top:221.00px;font-size:16px;line-height:1;color:#5f6368;white-space:pre;will-change:transform;transform:scaleX(1.0343);transform-origin:left center;-webkit-text-stroke:0.45px #5f6368;">Aktualis…</div>
<svg style="position:absolute;left:1422.5px;top:180.2px;" width="33" height="33" viewBox="0 0 24 24"><path d="M11 18h2v-2h-2v2zm1-16C6.48 2 2 6.48 2 12s4.48 10 10 10 10-4.48 10-10S17.52 2 12 2zm0 18c-4.41 0-8-3.59-8-8s3.59-8 8-8 8 3.59 8 8-3.59 8-8 8zm0-14c-2.21 0-4 1.79-4 4h2c0-1.1.9-2 2-2s2 .9 2 2c0 2-3 1.75-3 5h2c0-2.25 3-2.5 3-5 0-2.21-1.79-4-4-4z" fill="#5f6368"/></svg>
<div style="position:absolute;left:1421.00px;top:221.00px;font-size:16px;line-height:1;color:#5f6368;white-space:pre;will-change:transform;transform:scaleX(1.1151);transform-origin:left center;-webkit-text-stroke:0.45px #5f6368;">Hilfe</div>
<svg style="position:absolute;left:1519.5px;top:180.5px;" width="33" height="33" viewBox="0 0 24 24"><path d="M12 22c1.1 0 2-.9 2-2h-4c0 1.1.9 2 2 2zm6-6v-5c0-3.07-1.63-5.64-4.5-6.32V4c0-.83-.67-1.5-1.5-1.5s-1.5.67-1.5 1.5v.68C7.64 5.36 6 7.92 6 11v5l-2 2v1h16v-1l-2-2zm-2 1H8v-6c0-2.48 1.51-4.5 4-4.5s4 2.02 4 4.5v6z" fill="#5f6368"/></svg>
<div style="position:absolute;left:1537.4px;top:171.6px;width:27.4px;height:27.4px;border-radius:50%;background:#c5372c;"></div>
<div style="position:absolute;left:1549.6px;top:177.8px;width:3px;height:9.6px;background:#fff;"></div>
<div style="position:absolute;left:1549.6px;top:189.6px;width:3px;height:3px;background:#fff;"></div>
<div style="position:absolute;left:1487.00px;top:221.00px;font-size:16px;line-height:1;color:#5f6368;white-space:pre;will-change:transform;transform:scaleX(1.1074);transform-origin:left center;-webkit-text-stroke:0.45px #5f6368;">Benachrichti</div>
<div style="position:absolute;left:1507.00px;top:240.00px;font-size:16px;line-height:1;color:#5f6368;white-space:pre;will-change:transform;transform:scaleX(1.0770);transform-origin:left center;-webkit-text-stroke:0.45px #5f6368;">gungen</div>
<div style="position:absolute;left:1605.5px;top:194px;width:1.4px;height:44px;background:#dadce0;"></div>
<div style="position:absolute;left:1625.00px;top:197.00px;font-size:16.8px;line-height:1;color:#3c4043;white-space:pre;will-change:transform;transform:scaleX(0.9487);transform-origin:left center;">807-754-3128 (GOBOSERVICE …</div>
<div style="position:absolute;left:1736.00px;top:219.00px;font-size:17.2px;line-height:1;color:#3c4043;white-space:pre;will-change:transform;transform:scaleX(0.9967);transform-origin:left center;">ingo.k@ulbach.de</div>
<div style="position:absolute;left:1890.6px;top:193.7px;width:44.4px;height:44.4px;border-radius:50%;background:#7e57c2;"></div>
<div style="position:absolute;left:1911.6px;top:206.4px;width:2.4px;height:18.6px;background:#fff;"></div>
<div style="position:absolute;left:1957px;top:266px;width:11px;height:149px;background:#b6b6b6;"></div>
<div style="position:absolute;left:46.7px;top:282px;width:78.4px;height:78.4px;border-radius:50%;background:#fff;box-shadow:0 1px 3px rgba(60,64,67,0.30),0 3px 8px 2px rgba(60,64,67,0.16);"></div>
<div style="position:absolute;left:83.1px;top:304px;width:5.6px;height:17.8px;background:#ea4335;"></div>
<div style="position:absolute;left:83.1px;top:321px;width:5.6px;height:17.2px;background:#34a853;"></div>
<div style="position:absolute;left:68.9px;top:318.2px;width:17px;height:5.6px;background:#fbbc04;"></div>
<svg style="position:absolute;left:83px;top:316px" width="20" height="10" viewBox="0 0 20 10"><path d="M0 5 L2.9 2.2 H19.8 V7.8 H2.9z" fill="#4285f4"/></svg>
<div style="position:absolute;left:52.00px;top:368.00px;font-size:16px;line-height:1;color:#5f6368;white-space:pre;will-change:transform;transform:scaleX(1.0876);transform-origin:left center;-webkit-text-stroke:0.45px #5f6368;">Erstellen</div>
<div style="position:absolute;left:51.4px;top:418.2px;width:66.4px;height:38.4px;border-radius:20px;background:#1967d2;"></div>
<svg style="position:absolute;left:67.7px;top:420.6px;" width="33.6" height="33.6" viewBox="0 0 24 24"><path d="M18 11v2h4v-2h-4zm-2 6.61c.96.71 2.21 1.65 3.2 2.39.4-.53.8-1.07 1.2-1.6-.99-.74-2.24-1.68-3.2-2.4-.4.54-.8 1.08-1.2 1.61zM20.4 5.6c-.4-.53-.8-1.07-1.2-1.6-.99.74-2.24 1.68-3.2 2.4.4.53.8 1.07 1.2 1.6.96-.72 2.21-1.65 3.2-2.4zM4 9c-1.1 0-2 .9-2 2v2c0 1.1.9 2 2 2h1v4h2v-4h1l5 3V6L8 9H4zm5.03 1.71L11 9.53v4.94l-1.97-1.18-.48-.29H4v-2h4.55l.48-.29zM15.5 12c0-1.33-.58-2.53-1.5-3.35v6.69c.92-.81 1.5-2.01 1.5-3.34z" fill="#fff"/></svg>
<div style="position:absolute;left:54.60px;top:465.00px;font-size:16px;line-height:1;color:#185abc;white-space:pre;will-change:transform;transform:scaleX(1.0458);transform-origin:left center;-webkit-text-stroke:0.7px #185abc;">Kampa-</div>
<div style="position:absolute;left:65.50px;top:484.00px;font-size:16px;line-height:1;color:#185abc;white-space:pre;will-change:transform;transform:scaleX(1.0479);transform-origin:left center;-webkit-text-stroke:0.7px #185abc;">gnen</div>
<svg style="position:absolute;left:68px;top:515px;" width="34" height="32" viewBox="0 0 34 32"><path d="M8.2 4.200H24.800V14.400a8.300 8.300 0 0 1-16.600 0z" fill="none" stroke="#5f6368" stroke-width="2.7"/><path d="M8.2 6.300H3.500L8.600 16.200M24.800 6.300H29.500L24.400 16.200" fill="none" stroke="#5f6368" stroke-width="2.5" stroke-linejoin="round"/><path d="M16.500 22.700v6.200M11 28.600h11" stroke="#5f6368" stroke-width="2.7"/><circle cx="16.500" cy="12.300" r="2.600" fill="#5f6368"/></svg>
<div style="position:absolute;left:45.00px;top:559.00px;font-size:16px;line-height:1;color:#5f6368;white-space:pre;will-change:transform;transform:scaleX(1.0964);transform-origin:left center;-webkit-text-stroke:0.45px #5f6368;">Zielvorha-</div>
<div style="position:absolute;left:71.00px;top:578.00px;font-size:16px;line-height:1;color:#5f6368;white-space:pre;will-change:transform;transform:scaleX(0.9886);transform-origin:left center;-webkit-text-stroke:0.45px #5f6368;">ben</div>
<svg style="position:absolute;left:67.8px;top:618.4px;" width="33.4" height="33.4" viewBox="0 0 24 24"><path d="M13.783 15.172l2.121-2.121 5.996 5.996-2.121 2.121zM17.5 10c1.93 0 3.5-1.57 3.5-3.5 0-.58-.16-1.12-.41-1.6l-2.7 2.7-1.49-1.49 2.7-2.7c-.48-.25-1.02-.41-1.6-.41C15.57 3 14 4.570 14 6.5c0 .41.08.8.21 1.16l-1.85 1.850-1.78-1.780.71-.71-1.41-1.41L12 3.490c-1.17-1.17-3.07-1.17-4.24 0L4.220 7.030l1.41 1.41H2.810l-.71.71 3.540 3.540.71-.71V9.150l1.41 1.41.71-.71 1.780 1.780-7.410 7.410 2.120 2.120L16.340 9.790c.36.130.75.21 1.160.21z" fill="#5f6368"/></svg>
<div style="position:absolute;left:64.00px;top:662.00px;font-size:16px;line-height:1;color:#5f6368;white-space:pre;will-change:transform;transform:scaleX(1.0974);transform-origin:left center;-webkit-text-stroke:0.45px #5f6368;">Tools</div>
<svg style="position:absolute;left:67.9px;top:703.2px;" width="33.2" height="33.2" viewBox="0 0 24 24"><path d="M20 4H4c-1.110 0-1.990.89-1.990 2L2 18c0 1.110.89 2 2 2h16c1.110 0 2-.89 2-2V6c0-1.110-.89-2-2-2zm0 14H4v-6h16v6zm0-10H4V6h16v2z" fill="#5f6368"/></svg>
<div style="position:absolute;left:54.00px;top:747.00px;font-size:16px;line-height:1;color:#5f6368;white-space:pre;will-change:transform;transform:scaleX(1.0530);transform-origin:left center;-webkit-text-stroke:0.45px #5f6368;">Abrech-</div>
<div style="position:absolute;left:65.50px;top:766.00px;font-size:16px;line-height:1;color:#5f6368;white-space:pre;will-change:transform;transform:scaleX(1.0479);transform-origin:left center;-webkit-text-stroke:0.45px #5f6368;">nung</div>
<svg style="position:absolute;left:67.8px;top:807.2px;" width="33.4" height="33.4" viewBox="0 0 24 24"><path d="M19.43 12.980c.04-.32.07-.64.07-.98 0-.34-.03-.66-.07-.98l2.110-1.650c.19-.15.24-.42.120-.64l-2-3.460c-.09-.16-.26-.25-.44-.25-.06 0-.12.010-.17.030l-2.490 1c-.52-.4-1.080-.73-1.690-.98l-.38-2.650C14.460 2.180 14.250 2 14 2h-4c-.25 0-.46.18-.49.42l-.38 2.650c-.61.25-1.170.59-1.690.98l-2.490-1c-.06-.02-.12-.03-.18-.03-.17 0-.34.09-.43.25l-2 3.460c-.13.22-.07.49.12.64l2.110 1.650c-.04.32-.07.65-.07.98 0 .33.03.66.07.98l-2.110 1.650c-.19.15-.24.42-.12.64l2 3.460c.09.16.26.25.44.25.06 0 .12-.010.17-.03l2.490-1c.52.4 1.080.73 1.690.98l.38 2.650c.03.24.24.42.49.42h4c.25 0 .46-.18.49-.42l.38-2.650c.61-.25 1.170-.59 1.690-.98l2.490 1c.06.02.12.03.18.03.17 0 .34-.09.43-.25l2-3.460c.12-.22.07-.49-.12-.64l-2.110-1.650zm-1.980-1.710c.04.31.05.52.05.73 0 .21-.02.43-.05.73l-.14 1.130.89.7 1.080.84-.7 1.210-1.270-.51-1.040-.42-.9.68c-.43.32-.84.56-1.250.73l-1.060.43-.16 1.130-.2 1.350h-1.400l-.19-1.350-.16-1.130-1.060-.43c-.43-.18-.83-.41-1.230-.71l-.91-.7-1.060.43-1.270.51-.7-1.210 1.080-.84.89-.7-.14-1.130c-.03-.31-.05-.54-.05-.74s.02-.43.05-.73l.14-1.130-.89-.7-1.080-.84.7-1.210 1.270.51 1.040.42.9-.68c.43-.32.840-.56 1.250-.73l1.060-.43.16-1.130.2-1.350h1.390l.19 1.350.16 1.130 1.060.43c.43.18.83.41 1.230.71l.91.7 1.060-.43 1.270-.51.7 1.210-1.070.85-.89.7.14 1.130z" fill="#5f6368"/><circle cx="12" cy="12" r="3.300" fill="#5f6368"/></svg>
<div style="position:absolute;left:41.00px;top:851.00px;font-size:16px;line-height:1;color:#5f6368;white-space:pre;will-change:transform;transform:scaleX(1.0989);transform-origin:left center;-webkit-text-stroke:0.45px #5f6368;">Verwaltung</div>
<div style="position:absolute;left:151px;top:282px;width:349px;height:67px;border-radius:34px;background:#1a67d3;"></div>
<div style="position:absolute;left:185.00px;top:306.00px;font-size:20px;line-height:1;color:#ffffff;white-space:pre;will-change:transform;transform:scaleX(1.0416);transform-origin:left center;-webkit-text-stroke:0.4px #ffffff;">Übersicht</div>
<div style="position:absolute;left:185.00px;top:383.00px;font-size:20px;line-height:1;color:#202124;white-space:pre;will-change:transform;transform:scaleX(1.0265);transform-origin:left center;-webkit-text-stroke:0.4px #202124;">Empfehlungen</div>
<div style="position:absolute;left:185.00px;top:461.00px;font-size:20px;line-height:1;color:#202124;white-space:pre;will-change:transform;transform:scaleX(1.0446);transform-origin:left center;-webkit-text-stroke:0.4px #202124;">Statistiken und Berichte</div>
<div style="position:absolute;left:185.00px;top:538.00px;font-size:20px;line-height:1;color:#202124;white-space:pre;will-change:transform;transform:scaleX(1.0141);transform-origin:left center;-webkit-text-stroke:0.4px #202124;">Kampagnen</div>
<div style="position:absolute;left:185.00px;top:615.00px;font-size:20px;line-height:1;color:#202124;white-space:pre;will-change:transform;transform:scaleX(0.9995);transform-origin:left center;-webkit-text-stroke:0.4px #202124;">Assets</div>
<div style="position:absolute;left:185.00px;top:679.00px;font-size:20px;line-height:1;color:#202124;white-space:pre;will-change:transform;transform:scaleX(1.0412);transform-origin:left center;-webkit-text-stroke:0.4px #202124;">Zielgruppen, Keywords</div>
<div style="position:absolute;left:185.00px;top:707.00px;font-size:20px;line-height:1;color:#202124;white-space:pre;will-change:transform;transform:scaleX(1.0305);transform-origin:left center;-webkit-text-stroke:0.4px #202124;">und Inhalte</div>
<div style="position:absolute;left:185.00px;top:771.00px;font-size:20px;line-height:1;color:#202124;white-space:pre;will-change:transform;transform:scaleX(1.0569);transform-origin:left center;-webkit-text-stroke:0.4px #202124;">Änderungsverlauf</div>
<svg style="position:absolute;left:444.6px;top:466.2px;" width="17.2" height="10.4" viewBox="0 0 17.2 10.4"><polyline points="1.2,1.2 8.600,8.700 16,1.2" fill="none" stroke="#3c4043" stroke-width="2.1" stroke-linejoin="miter"/></svg>
<svg style="position:absolute;left:444.6px;top:543.7px;" width="17.2" height="10.4" viewBox="0 0 17.2 10.4"><polyline points="1.2,1.2 8.600,8.700 16,1.2" fill="none" stroke="#3c4043" stroke-width="2.1" stroke-linejoin="miter"/></svg>
<svg style="position:absolute;left:444.6px;top:621px;" width="17.2" height="10.4" viewBox="0 0 17.2 10.4"><polyline points="1.2,1.2 8.600,8.700 16,1.2" fill="none" stroke="#3c4043" stroke-width="2.1" stroke-linejoin="miter"/></svg>
<svg style="position:absolute;left:444.6px;top:698.5px;" width="17.2" height="10.4" viewBox="0 0 17.2 10.4"><polyline points="1.2,1.2 8.600,8.700 16,1.2" fill="none" stroke="#3c4043" stroke-width="2.1" stroke-linejoin="miter"/></svg>
<div style="position:absolute;left:555.5px;top:282.2px;width:198.5px;height:66.8px;border-radius:5px;background:#fff;box-shadow:0 1px 2px rgba(60,64,67,0.30),0 1px 4px 1px rgba(60,64,67,0.16);"></div>
<div style="position:absolute;left:564.00px;top:294.00px;font-size:17.2px;line-height:1;color:#5f6368;white-space:pre;will-change:transform;transform:scaleX(0.9938);transform-origin:left center;">Zurück zu</div>
<svg style="position:absolute;left:566px;top:319px;" width="23.6" height="16.4" viewBox="0 0 23.6 16.4"><rect x="0" y="0" width="10.6" height="7" rx="1.2" fill="#80868b"/><rect x="13" y="0" width="10.6" height="7" rx="1.2" fill="#80868b"/><rect x="0" y="9.4" width="10.6" height="7" rx="1.2" fill="#80868b"/><rect x="13" y="9.4" width="10.6" height="7" rx="1.2" fill="#80868b"/></svg>
<div style="position:absolute;left:598.40px;top:317.00px;font-size:20px;line-height:1;color:#202124;white-space:pre;will-change:transform;transform:scaleX(0.9988);transform-origin:left center;-webkit-text-stroke:0.3px #202124;">Alle Kampagnen</div>
<div style="position:absolute;left:765px;top:282.2px;width:370px;height:66.8px;border-radius:5px;background:#fff;overflow:hidden;box-shadow:0 1px 2px rgba(60,64,67,0.30),0 1px 4px 1px rgba(60,64,67,0.16);"><div style="position:absolute;left:20px;top:60.8px;width:330px;height:10px;border-radius:5px 5px 0 0;background:#1a73e8;"></div></div>
<div style="position:absolute;left:782.60px;top:294.00px;font-size:17.2px;line-height:1;color:#5f6368;white-space:pre;will-change:transform;transform:scaleX(1.0284);transform-origin:left center;">Nicht gespeicherte Ansicht (2 Filter)</div>
<svg style="position:absolute;left:784px;top:315.4px;" width="23" height="23" viewBox="0 0 23 23"><circle cx="11.5" cy="11.5" r="10.3" fill="none" stroke="#5f6368" stroke-width="2"/><g transform="translate(5.2,5.2) scale(0.525)"><path d="M22.7 19l-9.100-9.100c.9-2.3.4-5-1.500-6.900-2-2-5-2.400-7.400-1.300L9 6 6 9 1.600 4.700C.4 7.100.9 10.100 2.900 12.100c1.900 1.900 4.600 2.400 6.900 1.500l9.100 9.100c.4.4 1 .4 1.400 0l2.300-2.300c.5-.4.5-1.100.1-1.400z" fill="#5f6368"/></g></svg>
<div style="position:absolute;left:816.50px;top:317.00px;font-size:20px;line-height:1;color:#202124;white-space:pre;will-change:transform;transform:scaleX(1.0405);transform-origin:left center;font-style:italic;-webkit-text-stroke:0.3px #202124;">Suchkampagnen (geändert)</div>
<svg style="position:absolute;left:1106px;top:313.4px;" width="13.6" height="6.8" viewBox="0 0 13.6 6.8"><path d="M0 0h13.6L6.8 6.8z" fill="#5f6368"/></svg>
<div style="position:absolute;left:1146.4px;top:282.4px;width:293.6px;height:66.2px;border-radius:5px;box-shadow:inset 0 0 0 1.3px #80868b;"></div>
<div style="position:absolute;left:1170.00px;top:296.00px;font-size:16.8px;line-height:1;color:#5f6368;white-space:pre;will-change:transform;transform:scaleX(1.0200);transform-origin:left center;">Kampagnen (1)</div>
<div style="position:absolute;left:1170.00px;top:317.00px;font-size:20px;line-height:1;color:#202124;white-space:pre;will-change:transform;transform:scaleX(1.0206);transform-origin:left center;-webkit-text-stroke:0.3px #202124;">Kampagne auswählen</div>
<svg style="position:absolute;left:1405px;top:313.4px;" width="13.6" height="6.8" viewBox="0 0 13.6 6.8"><path d="M0 0h13.6L6.8 6.8z" fill="#5f6368"/></svg>
<div style="position:absolute;left:556.40px;top:374.00px;font-size:17.6px;line-height:1;color:#5f6368;white-space:pre;will-change:transform;transform:scaleX(0.9870);transform-origin:left center;">Filter</div>
<div style="position:absolute;left:629.6px;top:366px;width:334.4px;height:43px;border-radius:22px;box-shadow:inset 0 0 0 1.2px #dadce0;"></div>
<div style="position:absolute;left:647.00px;top:379.00px;font-size:18px;line-height:1;color:#4a4e52;white-space:pre;will-change:transform;transform:scaleX(1.0165);transform-origin:left center;-webkit-text-stroke:0.45px #4a4e52;">Kampagnenstatus: Aktiviert, Pausiert</div>
<div style="position:absolute;left:976px;top:366px;width:380.4px;height:43px;border-radius:22px;box-shadow:inset 0 0 0 1.2px #dadce0;"></div>
<div style="position:absolute;left:994.00px;top:379.00px;font-size:18px;line-height:1;color:#4a4e52;white-space:pre;will-change:transform;transform:scaleX(1.0183);transform-origin:left center;-webkit-text-stroke:0.45px #4a4e52;">Anzeigengruppenstatus: Aktiviert, Pausiert</div>
<div style="position:absolute;left:1373.50px;top:379.00px;font-size:18px;line-height:1;color:#a4a8ac;white-space:pre;will-change:transform;transform:scaleX(0.9957);transform-origin:left center;">Filter hinzufügen</div>
<svg style="position:absolute;left:1744.3px;top:357px;" width="33.6" height="33.6" viewBox="0 0 24 24"><path d="M12 20q-3.35 0-5.675-2.325T4 12q0-3.35 2.325-5.675T12 4q1.725 0 3.3.712T18 6.75V4h2v7h-7V9h4.2q-.8-1.4-2.187-2.2T12 6Q9.5 6 7.75 7.750T6 12q0 2.5 1.75 4.250T12 18q1.925 0 3.475-1.100T17.650 14h2.100q-.7 2.650-2.850 4.325T12 20Z" fill="#5f6368"/></svg>
<div style="position:absolute;left:1710.40px;top:400.00px;font-size:16.4px;line-height:1;color:#5f6368;white-space:pre;will-change:transform;transform:scaleX(1.0109);transform-origin:left center;-webkit-text-stroke:0.45px #5f6368;">Zurücksetz…</div>
<svg style="position:absolute;left:1868px;top:357px;" width="33" height="33" viewBox="0 0 24 24"><path d="M17 3H5c-1.110 0-2 .9-2 2v14c0 1.100.89 2 2 2h14c1.100 0 2-.9 2-2V7l-4-4zm2 16H5V5h11.170L19 7.830V19zm-7-7c-1.660 0-3 1.340-3 3s1.340 3 3 3 3-1.340 3-3-1.340-3-3-3zM6 6h9v4H6z" fill="#5f6368"/></svg>
<div style="position:absolute;left:1846.00px;top:398.00px;font-size:16.4px;line-height:1;color:#5f6368;white-space:pre;will-change:transform;transform:scaleX(1.0432);transform-origin:left center;-webkit-text-stroke:0.45px #5f6368;">Speichern</div>
<div style="position:absolute;left:556px;top:427px;width:1401px;height:1.2px;background:#dadce0;"></div>
<div style="position:absolute;left:556.50px;top:457.00px;font-size:30.6px;line-height:1;color:#202124;white-space:pre;will-change:transform;transform:scaleX(0.9944);transform-origin:left center;">Übersicht</div>
<div style="position:absolute;left:1020.00px;top:464.00px;font-size:19.4px;line-height:1;color:#5f6368;white-space:pre;will-change:transform;transform:scaleX(1.0572);transform-origin:left center;">Benutzerdefiniert</div>
<div style="position:absolute;left:1187px;top:440px;width:360.4px;height:65.4px;border-radius:5px;box-shadow:inset 0 0 0 1.3px #80868b;"></div>
<div style="position:absolute;left:1211.20px;top:464.00px;font-size:19.4px;line-height:1;color:#3c4043;white-space:pre;will-change:transform;transform:scaleX(1.0105);transform-origin:left center;">1. Nov. 2019 bis 31. Dez. 2024</div>
<svg style="position:absolute;left:1511px;top:470px;" width="14" height="7" viewBox="0 0 14 7"><path d="M0 0h14L7 7z" fill="#5f6368"/></svg>
<svg style="position:absolute;left:1572px;top:461.8px;" width="16" height="22" viewBox="0 0 16 22"><polyline points="14,1.2 2.600,11 14,20.8" fill="none" stroke="#5f6368" stroke-width="2.3"/></svg>
<svg style="position:absolute;left:1639.6px;top:461.8px;" width="16" height="22" viewBox="0 0 16 22"><polyline points="2,1.2 13.400,11 2,20.800" fill="none" stroke="#5f6368" stroke-width="2.3"/></svg>
<div style="position:absolute;left:1697.00px;top:464.00px;font-size:19.2px;line-height:1;color:#1b6fe0;white-space:pre;will-change:transform;transform:scaleX(1.0563);transform-origin:left center;-webkit-text-stroke:0.45px #1b6fe0;">Letzte 30 Tage anzeigen</div>
<div style="position:absolute;left:569px;top:545px;width:252px;height:66px;border-radius:33px;background:#1a73e8;box-shadow:0 2px 4px rgba(60,64,67,0.30),0 5px 12px 3px rgba(60,64,67,0.18);"></div>
<svg style="position:absolute;left:591px;top:566.5px;" width="23" height="23" viewBox="0 0 23 23"><path d="M11.5 0v23M0 11.5h23" stroke="#fff" stroke-width="2.5"/></svg>
<div style="position:absolute;left:636.00px;top:569.00px;font-size:19.2px;line-height:1;color:#ffffff;white-space:pre;will-change:transform;transform:scaleX(1.0450);transform-origin:left center;-webkit-text-stroke:0.45px #ffffff;">Neue Kampagne</div>
<svg style="position:absolute;left:1729px;top:549.6px;" width="31" height="31" viewBox="0 0 24 24"><path d="M18 15v3H6v-3H4v3c0 1.100.9 2 2 2h12c1.100 0 2-.9 2-2v-3h-2zm-1-4l-1.410-1.410L13 12.170V4h-2v8.170L8.410 9.590 7 11l5 5 5-5z" fill="#5f6368"/></svg>
<div style="position:absolute;left:1694.00px;top:590.00px;font-size:16.6px;line-height:1;color:#5f6368;white-space:pre;will-change:transform;transform:scaleX(0.9885);transform-origin:left center;-webkit-text-stroke:0.45px #5f6368;">Herunterla…</div>
<svg style="position:absolute;left:1872px;top:549.4px;" width="33" height="33" viewBox="0 0 24 24"><path d="M20 2H4c-1.100 0-1.990.9-1.990 2L2 22l4-4h14c1.100 0 2-.9 2-2V4c0-1.100-.9-2-2-2zm0 14H5.170L4 17.170V4h16v12zm-9-4h2v2h-2zm0-6h2v4h-2z" fill="#5f6368"/></svg>
<div style="position:absolute;left:1852.00px;top:590.00px;font-size:16.6px;line-height:1;color:#5f6368;white-space:pre;will-change:transform;transform:scaleX(1.0017);transform-origin:left center;-webkit-text-stroke:0.45px #5f6368;">Feedback</div>
<div style="position:absolute;left:570.3px;top:640px;width:1375.4px;height:476.5px;border-radius:10px;background:#fff;box-shadow:inset 0 0 0 1.2px #dadce0;overflow:hidden;"><div style="position:absolute;left:0;top:0;width:247px;height:140px;background:#1a73e8;"></div><div style="position:absolute;left:247px;top:0;width:249.4px;height:140px;background:#d93025;"></div><div style="position:absolute;left:745.6px;top:0;width:249.4px;height:140px;background:#f9ab00;"></div><div style="position:absolute;left:496.4px;top:0;width:1px;height:140px;background:#e8eaed;"></div><div style="position:absolute;left:995px;top:0;width:1px;height:140px;background:#e8eaed;"></div><div style="position:absolute;left:0;top:139.9px;width:1376px;height:1.2px;background:#dadce0;"></div></div>
<svg style="position:absolute;left:602px;top:676.4px;" width="13" height="6.8" viewBox="0 0 13 6.8"><path d="M0 0h13L6.500 6.800z" fill="#fff"/></svg>
<div style="position:absolute;left:625.00px;top:670.00px;font-size:19.4px;line-height:1;color:#fff;white-space:pre;will-change:transform;transform:scaleX(1.0268);transform-origin:left center;-webkit-text-stroke:0.4px #fff;">Klicks</div>
<div style="position:absolute;left:603.50px;top:707.00px;font-size:44.4px;line-height:1;color:#fff;white-space:pre;will-change:transform;transform:scaleX(1.0029);transform-origin:left center;-webkit-text-stroke:0.5px #fff;">43113</div>
<svg style="position:absolute;left:850px;top:676.4px;" width="13" height="6.8" viewBox="0 0 13 6.8"><path d="M0 0h13L6.500 6.800z" fill="#fff"/></svg>
<div style="position:absolute;left:873.00px;top:670.00px;font-size:19.4px;line-height:1;color:#fff;white-space:pre;will-change:transform;transform:scaleX(1.0481);transform-origin:left center;-webkit-text-stroke:0.4px #fff;">Impressionen</div>
<div style="position:absolute;left:852.00px;top:707.00px;font-size:44.4px;line-height:1;color:#fff;white-space:pre;will-change:transform;transform:scaleX(0.9626);transform-origin:left center;-webkit-text-stroke:0.5px #fff;">6,1 Mio.</div>
<svg style="position:absolute;left:1099.4px;top:676.4px;" width="13" height="6.8" viewBox="0 0 13 6.8"><path d="M0 0h13L6.500 6.800z" fill="#3c4043"/></svg>
<div style="position:absolute;left:1122.30px;top:670.00px;font-size:19.4px;line-height:1;color:#3c4043;white-space:pre;will-change:transform;transform:scaleX(1.0228);transform-origin:left center;-webkit-text-stroke:0.4px #3c4043;">Durchschn. CPC</div>
<div style="position:absolute;left:1101.00px;top:707.00px;font-size:44.4px;line-height:1;color:#3c4043;white-space:pre;will-change:transform;transform:scaleX(0.9399);transform-origin:left center;-webkit-text-stroke:0.5px #3c4043;">0,27 €</div>
<svg style="position:absolute;left:1348.5px;top:676.4px;" width="13" height="6.8" viewBox="0 0 13 6.8"><path d="M0 0h13L6.500 6.800z" fill="#fff"/></svg>
<div style="position:absolute;left:1371.50px;top:670.00px;font-size:19.4px;line-height:1;color:#fff;white-space:pre;will-change:transform;transform:scaleX(1.0352);transform-origin:left center;-webkit-text-stroke:0.4px #fff;">Kosten</div>
<div style="position:absolute;left:1348.50px;top:707.00px;font-size:44.4px;line-height:1;color:#fff;white-space:pre;will-change:transform;transform:scaleX(1.0085);transform-origin:left center;-webkit-text-stroke:0.5px #fff;">11727 €</div>
<svg style="position:absolute;left:1657.5px;top:678.4px;" width="33" height="33" viewBox="0 0 24 24"><path d="M6 9.990h2v7H6zm8 3h2v4h-2zm-4-6h2v10h-2zM20 7V4h-2v3h-3v2h3v3h2V9h3V7zm-2 12H4V5h12V3H4c-1.100 0-2 .9-2 2v14c0 1.100.9 2 2 2h14c1.100 0 2-.9 2-2v-5h-2v5z" fill="#5f6368"/></svg>
<div style="position:absolute;left:1621.00px;top:721.00px;font-size:19.4px;line-height:1;color:#5f6368;white-space:pre;will-change:transform;transform:scaleX(1.0250);transform-origin:left center;-webkit-text-stroke:0.4px #5f6368;">Kennzahlen</div>
<svg style="position:absolute;left:1789px;top:678.6px;" width="33" height="33" viewBox="0 0 24 24"><path d="M3 17v2h6v-2H3zM3 5v2h10V5H3zm10 16v-2h8v-2h-8v-2h-2v6h2zM7 9v2H3v2h4v2h2V9H7zm14 4v-2H11v2h10zm-6-4h2V7h4V5h-4V3h-2v6z" fill="#5f6368"/></svg>
<div style="position:absolute;left:1761.00px;top:721.00px;font-size:19.4px;line-height:1;color:#5f6368;white-space:pre;will-change:transform;transform:scaleX(1.0261);transform-origin:left center;-webkit-text-stroke:0.4px #5f6368;">Anpassen</div>
<svg style="position:absolute;left:1885px;top:694.6px;" width="31" height="31" viewBox="0 0 24 24"><path d="M12 8c1.100 0 2-.9 2-2s-.9-2-2-2-2 .9-2 2 .9 2 2 2zm0 2c-1.100 0-2 .9-2 2s.9 2 2 2 2-.9 2-2-.9-2-2-2zm0 6c-1.100 0-2 .9-2 2s.9 2 2 2 2-.9 2-2-.9-2-2-2z" fill="#5f6368"/></svg>
<svg style="position:absolute;left:0;top:0" width="2000" height="1189" viewBox="0 0 2000 1189"><path d="M687 808.2H1828M687 928.8H1828" stroke="#e0e0e0" stroke-width="1.3"/><path d="M687 1049.2H1828.4" stroke="#757575" stroke-width="1.4"/><path d="M687.5 1049v4M1828 1049v4" stroke="#9e9e9e" stroke-width="1"/><polyline points="687.0,1003.0 744.0,951.0 801.1,927.0 858.1,966.0 915.2,985.0 972.2,990.6 1029.3,996.0 1086.3,998.0 1143.4,989.0 1200.4,998.0 1257.5,1017.0 1314.5,1027.0 1371.6,1024.5 1428.7,1022.0 1485.7,1028.0 1542.8,1020.0 1599.8,1012.0 1656.8,1005.0 1713.9,910.0 1771.0,845.0 1828.0,833.0" fill="none" stroke="#1a73e8" stroke-width="2.3" stroke-linejoin="round"/><polyline points="687.0,970.0 744.0,826.0 801.1,815.0 858.1,889.5 915.2,971.0 972.2,971.5 1029.3,970.5 1086.3,971.0 1143.4,971.0 1200.4,970.6 1257.5,971.5 1314.5,972.7 1371.6,971.5 1428.7,971.0 1485.7,970.0 1542.8,970.5 1599.8,971.6 1656.8,970.0 1713.9,969.0 1771.0,970.5 1828.0,972.0" fill="none" stroke="#f9ab00" stroke-width="2.3" stroke-linejoin="round"/><polyline points="687.0,977.0 744.0,842.0 801.1,824.5 858.1,911.0 915.2,921.6 972.2,935.5 1029.3,950.0 1086.3,995.0 1143.4,1017.6 1200.4,1031.0 1257.5,1040.6 1314.5,1045.0 1371.6,1040.0 1428.7,1037.6 1485.7,1044.0 1542.8,1043.0 1599.8,1040.0 1656.8,1030.0 1713.9,1029.6 1771.0,1020.0 1828.0,1024.5" fill="none" stroke="#d93025" stroke-width="2.3" stroke-linejoin="round"/></svg>
<div style="position:absolute;left:687.00px;top:1059.00px;font-size:16.4px;line-height:1;color:#757575;white-space:pre;will-change:transform;transform:scaleX(1.0000);transform-origin:left center;">4. Quartal 2019</div>
<div style="position:absolute;left:1715.00px;top:1059.00px;font-size:16.4px;line-height:1;color:#757575;white-space:pre;will-change:transform;transform:scaleX(1.0000);transform-origin:left center;">4. Quartal 2024</div>
<div style="position:absolute;left:570px;top:1140.4px;width:1372px;height:20.6px;border-radius:10px 10px 0 0;background:#fff;box-shadow:inset 0 1.2px 0 0 #dadce0, inset 1.2px 0 0 0 #dadce0, inset -1.2px 0 0 0 #dadce0;"></div>
</body></html>
